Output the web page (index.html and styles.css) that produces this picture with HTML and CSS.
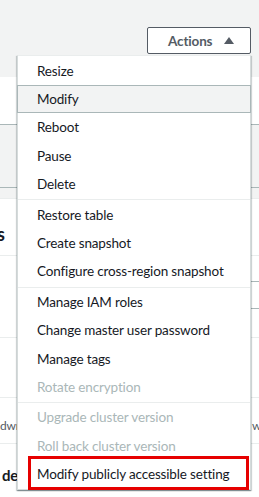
FILE: index.html
```html
<!DOCTYPE html>
<html lang="en">
<head>
  <meta charset="UTF-8">
  <meta name="viewport" content="width=device-width, initial-scale=1.0">
  <title>Cluster actions</title>
  <link rel="stylesheet" href="styles.css">
</head>
<body>

  <div class="page-header">
    <div class="actions">
      <button class="actions-btn">Actions
        <svg class="caret" width="10" height="7" viewBox="0 0 10 7"><polygon points="0,7 5,0 10,7" /></svg>
      </button>

      <div class="menu">
        <div class="group">
          <div class="item">Resize</div>
          <div class="item active">Modify</div>
          <div class="item">Reboot</div>
          <div class="item">Pause</div>
          <div class="item">Delete</div>
        </div>
        <div class="group">
          <div class="item">Restore table</div>
          <div class="item">Create snapshot</div>
          <div class="item">Configure cross-region snapshot</div>
        </div>
        <div class="group">
          <div class="item">Manage IAM roles</div>
          <div class="item">Change master user password</div>
          <div class="item">Manage tags</div>
          <div class="item disabled">Rotate encryption</div>
        </div>
        <div class="group">
          <div class="item disabled">Upgrade cluster version</div>
          <div class="item disabled">Roll back cluster version</div>
          <div class="item marked">Modify publicly accessible setting</div>
        </div>
      </div>
    </div>
  </div>

  <!-- page content behind the open menu -->
  <div class="spacer"></div>
  <div class="band"></div>
  <div class="band-foot"></div>

  <div class="panel-head">
    <h3 class="panel-title">Details</h3>
  </div>

  <div class="form-row">
    <div class="field"></div>
  </div>

  <div class="row row-empty"></div>

  <div class="row row-data">
    <span class="cell">dwn4xq2mrtq.us-east-1</span>
    <span class="cell">waiting</span>
  </div>

  <div class="row row-last">
    <strong class="db-name">dev</strong>
  </div>

</body>
</html>
```

FILE: styles.css
```css
/* General Reset */
* {
  margin: 0;
  padding: 0;
  box-sizing: border-box;
}

body {
  font-family: Lato, "Liberation Sans", Arial, sans-serif;
  font-size: 13.5px;
  letter-spacing: -0.15px;
  color: #16191f;
  background-color: #fff;
  overflow: hidden;
}

/* Header with the Actions button */
.page-header {
  height: 77px;
  background-color: #f2f3f3;
  display: flex;
  justify-content: flex-end;
  padding: 27px 8px 0 0;
}

.actions {
  position: relative;
  height: 27px;
}

.actions-btn {
  display: flex;
  align-items: center;
  gap: 12px;
  width: 104px;
  height: 27px;
  padding: 0 0 0 20px;
  border: 1px solid #545b64;
  border-radius: 2px;
  background-color: #fff;
  color: #545b64;
  font-family: inherit;
  font-size: 13.5px;
  letter-spacing: -0.15px;
  font-weight: bold;
}

.caret {
  fill: #545b64;
  margin-top: -1px;
}

/* Dropdown menu */
.menu {
  position: absolute;
  top: calc(100% + 1px);
  right: 0;
  width: 234px;
  padding: 0.5px 0;
  background-color: #fff;
  border: 1px solid #d5dbdb;
  border-top-color: #eaeded;
  box-shadow: 0 1px 1px 0 rgba(0, 28, 36, 0.3), 1px 1px 1px 0 rgba(0, 28, 36, 0.15), -1px 1px 1px 0 rgba(0, 28, 36, 0.15);
  z-index: 10;
}

.group + .group {
  margin-top: 1px;
  border-top: 1px solid #eaeded;
}

.item {
  position: relative;
  display: flex;
  align-items: center;
  height: 28.4px;
  padding-left: 19px;
  white-space: nowrap;
}

.item.active {
  margin: 0 -1px;
  padding-left: 20px;
  background-color: #f2f3f3;
  box-shadow: inset 0 0 0 1px #aab7b8;
}

.item.disabled {
  color: #aab7b8;
}

/* red annotation frame */
.item.marked::after {
  content: "";
  position: absolute;
  top: -4px;
  bottom: -1.5px;
  left: 10px;
  right: 1px;
  border: 3px solid #e60000;
}

/* Page content */
.spacer {
  height: 47px;
}

.band {
  height: 64px;
  background-color: #f2f3f3;
  border-top: 1px solid #aab7b8;
  border-bottom: 1px solid #aab7b8;
}

.band-foot {
  height: 11px;
  background-color: #f2f3f3;
  border-bottom: 1px solid #eaeded;
}

.panel-head {
  height: 57px;
  padding-top: 23px;
  border-bottom: 1px solid #eaeded;
  overflow: hidden;
}

.panel-title {
  margin-left: -50px;
  font-size: 18px;
  font-weight: bold;
  line-height: 24px;
}

.form-row {
  height: 82px;
  padding-top: 25px;
  border-bottom: 1px solid #eaeded;
  display: flex;
  justify-content: flex-end;
}

.field {
  width: 200px;
  height: 28px;
  margin-right: -20px;
  border: 1px solid #aab7b8;
}

.row {
  border-bottom: 1px solid #eaeded;
}

.row-empty {
  height: 60px;
}

.row-data {
  height: 46px;
  display: grid;
  grid-template-columns: 252px 1fr;
  align-items: center;
  padding-top: 9px;
  font-size: 12px;
  color: #545b64;
  white-space: nowrap;
}

.row-last {
  height: 60px;
  padding: 22px 0 0 2px;
  border-bottom: none;
}

.db-name {
  font-size: 15px;
}
```
